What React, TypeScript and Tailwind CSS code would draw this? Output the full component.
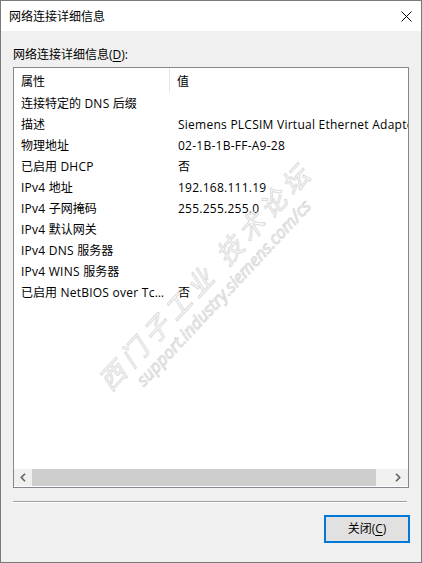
import React from 'react';

const rows: [string, string][] = [
  ['连接特定的 DNS 后缀', ''],
  ['描述', 'Siemens PLCSIM Virtual Ethernet Adapter'],
  ['物理地址', '02-1B-1B-FF-A9-28'],
  ['已启用 DHCP', '否'],
  ['IPv4 地址', '192.168.111.19'],
  ['IPv4 子网掩码', '255.255.255.0'],
  ['IPv4 默认网关', ''],
  ['IPv4 DNS 服务器', ''],
  ['IPv4 WINS 服务器', ''],
  ['已启用 NetBIOS over Tc…', '否'],
];

const font = "font-['Open_Sans','Noto_Sans_CJK_SC',sans-serif] text-[12px] leading-[16px]";

// latin runs are a touch wider in the original (Segoe UI)
function Txt({ s }: { s: string }) {
  return (
    <>
      {s.split(/([\x20-\x7e…]+)/).map((part, i) =>
        /[\x20-\x7e…]/.test(part) ? (
          <span key={i} className="tracking-[0.25px]">{part}</span>
        ) : (
          part
        )
      )}
    </>
  );
}

export default function App() {
  return (
    <div className={`w-[422px] h-[563px] border border-[#7a7a7a] bg-[#f0f0f0] flex flex-col text-black ${font}`}>
      {/* title bar */}
      <div className="h-[30px] bg-white flex items-center pl-[8px] pr-[9px]">
        <span className="pt-[2px]">网络连接详细信息</span>
        <svg className="ml-auto" width="11" height="11" viewBox="0 0 11 11">
          <path d="M0.5 0.5 L10.5 10.5 M10.5 0.5 L0.5 10.5" stroke="#000" strokeWidth="1" />
        </svg>
      </div>

      <div className="flex-1 flex flex-col px-[12px] pt-[16px]">
        <div>
          网络连接详细信息(<span className="underline underline-offset-2">D</span>):
        </div>

        {/* list view */}
        <div className="relative mt-[4px] h-[421px] border border-[#828790] bg-white flex flex-col overflow-hidden">
          <div className="h-[24px] flex items-stretch">
            <div className="w-[156px] shrink-0 pl-[7px] pt-[6px] border-r border-[#e5e5e5]">属性</div>
            <div className="pl-[7px] pt-[6px]">值</div>
          </div>
          {rows.map(([k, v]) => (
            <div key={k} className="h-[21px] flex items-start pt-[4px] whitespace-nowrap">
              <div className="w-[157px] shrink-0 pl-[7px] overflow-hidden"><Txt s={k} /></div>
              <div className="pl-[7px] min-w-0 overflow-hidden"><Txt s={v} /></div>
            </div>
          ))}

          {/* watermark */}
          <div className="absolute left-[198px] top-[214px] -translate-x-1/2 -translate-y-1/2 rotate-[-47deg] flex flex-col items-center pointer-events-none whitespace-nowrap text-transparent [-webkit-text-stroke:1px_#dcdcdc]">
            <div className="text-[26px] leading-[32px] tracking-[6px] italic font-['Noto_Sans_CJK_SC',sans-serif]">西门子工业 技术论坛</div>
            <div className="text-[17px] leading-[20px] italic font-['Open_Sans',sans-serif]">support.industry.siemens.com/cs</div>
          </div>

          {/* horizontal scrollbar */}
          <div className="mt-auto mb-[1px] h-[17px] flex bg-[#f0f0f0]">
            <div className="w-[18px] flex items-center justify-center">
              <svg width="6" height="9" viewBox="0 0 6 9">
                <path d="M5 0.8 L1.3 4.5 L5 8.2" stroke="#606060" strokeWidth="1.6" fill="none" />
              </svg>
            </div>
            <div className="w-[344px] bg-[#cdcdcd]" />
            <div className="flex-1 flex items-center justify-center pl-[12px]">
              <svg width="6" height="9" viewBox="0 0 6 9">
                <path d="M1 0.8 L4.7 4.5 L1 8.2" stroke="#606060" strokeWidth="1.6" fill="none" />
              </svg>
            </div>
          </div>
        </div>

        <div className="mt-[13px] mr-[2px] border-t border-[#a0a0a0] border-b border-b-white" />

        <div className="mt-[12px] flex justify-end -mr-[1px]">
          <button className="w-[86px] h-[28px] border-2 border-[#0078d7] bg-[#e1e1e1] flex items-center justify-center">
            关闭(<span className="underline underline-offset-2">C</span>)
          </button>
        </div>
      </div>
    </div>
  );
}
